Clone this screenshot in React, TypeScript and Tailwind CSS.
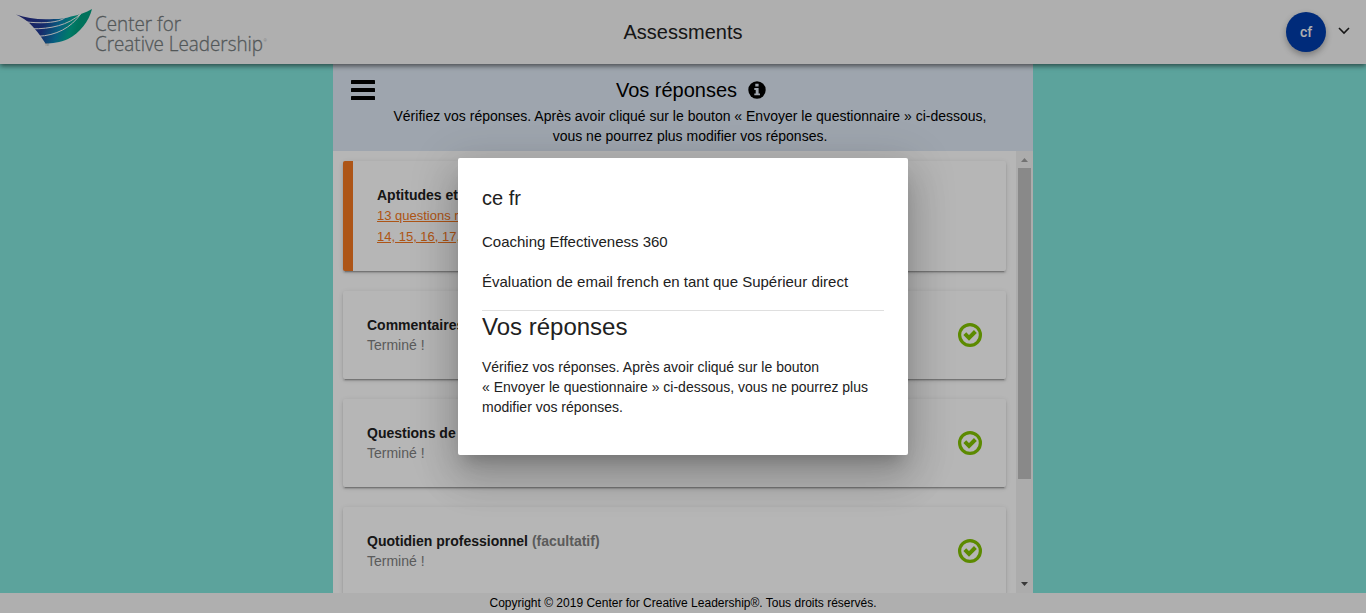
import React from "react";

function Logo() {
  return (
    <svg width="256" height="50" viewBox="12 7 256 50" role="img" aria-label="Center for Creative Leadership">
      <defs>
        <linearGradient id="wing" gradientUnits="userSpaceOnUse" x1="30" y1="10" x2="78" y2="26">
          <stop offset="0" stopColor="#28308a" />
          <stop offset="0.35" stopColor="#203c96" />
          <stop offset="0.65" stopColor="#0a84b4" />
          <stop offset="0.88" stopColor="#00ac93" />
          <stop offset="1" stopColor="#00a080" />
        </linearGradient>
      </defs>
      <path d="M16 14.500C27 18.500 40 20 54 19C60 19 66 18.500 71 16.500C79 15 86 12.500 92 9C89 21 80 33 68 39C60 42.500 52 43.500 45.500 43.500C41 36 34 27 27.500 21.500C24 18.500 20 16.500 16 14.500Z" fill="url(#wing)" />
      <g fill="none" stroke="#f5f5f5" strokeWidth="1">
        <path d="M25 21.800C40 23.500 54 23 62 19.500C63 19 64 18.500 65 17.500" />
        <path d="M32 28.800C50 29 68 25.500 81 13.500" />
        <path d="M38 36.300C56 35.500 71 28 81 13.500" />
      </g>
      <g fill="#737a7c" stroke="#737a7c" strokeWidth="0.300" fontFamily="'Open Sans', 'Noto Sans', sans-serif" fontWeight="300" fontSize="21">
        <text x="95" y="30.800" textLength="86" lengthAdjust="spacingAndGlyphs">Center for</text>
        <text x="95" y="50.500" textLength="168" lengthAdjust="spacingAndGlyphs">Creative Leadership</text>
        <text x="263.500" y="42" fontSize="4" strokeWidth="0">®</text>
        <text x="45" y="46" fontSize="3" strokeWidth="0">TM</text>
      </g>
    </svg>
  );
}

function DoneIcon() {
  return (
    <svg width="24" height="24" viewBox="0 0 24 24" fill="none" stroke="#81c200">
      <circle cx="12" cy="12" r="10.400" strokeWidth="3.200" />
      <path d="M6.800 10.700L11 14.900L17.400 8.500" strokeWidth="4" />
    </svg>
  );
}

function Card({ title, optional }: { title: string; optional?: string }) {
  return (
    <section className="flex h-[88px] shrink-0 items-center justify-between rounded-xs bg-white px-6 shadow-[0_3px_1px_-2px_rgba(0,0,0,.2),0_2px_2px_0_rgba(0,0,0,.14),0_1px_5px_0_rgba(0,0,0,.12)]">
      <div className="text-sm leading-5">
        <h2 className="font-bold text-[#212121]">
          {title} {optional && <span className="text-[#808080]">{optional}</span>}
        </h2>
        <p className="text-[#808080]">Terminé !</p>
      </div>
      <DoneIcon />
    </section>
  );
}

export default function App() {
  return (
    <div className="relative flex h-[613px] flex-col overflow-hidden bg-[#81e5db] font-['Liberation_Sans',Arial,sans-serif] text-black">
      <header className="relative z-10 grid h-16 shrink-0 grid-cols-[1fr_auto_1fr] items-center bg-[#f5f5f5] px-4 shadow-[0_2px_5px_rgba(0,0,0,.55)]">
        <div className="-ml-1"><Logo /></div>
        <h1 className="text-xl text-[#212121]">Assessments</h1>
        <div className="flex items-center justify-end gap-3">
          <span className="flex size-10 items-center justify-center rounded-full bg-[#003dac] font-['Roboto',sans-serif] text-sm font-medium text-[#f5f5f5] shadow-[0_3px_6px_rgba(0,0,0,.3)]">cf</span>
          <svg className="mb-0.5" width="12" height="8" viewBox="0 0 12 8" fill="none" stroke="#212121" strokeWidth="1.600"><path d="M1 1L6 6L11 1" /></svg>
        </div>
      </header>

      <main className="mx-auto flex min-h-0 w-[700px] flex-1 flex-col bg-white">
        <div className="flex h-[87px] shrink-0 items-start bg-[#dee8f4]">
          <button className="flex w-[60px] justify-center pt-4" aria-label="Menu">
            <svg width="24" height="20" viewBox="0 0 24 20">
              <rect width="24" height="4" rx=".6" />
              <rect y="8" width="24" height="4" rx=".6" />
              <rect y="16" width="24" height="4" rx=".6" />
            </svg>
          </button>
          <div className="w-[596px] text-center">
            <h2 className="flex h-10 items-center justify-center gap-[11px] pt-3 text-xl">
              Vos réponses
              <svg width="18" height="18" viewBox="0 0 18 18"><circle cx="9" cy="9" r="8.700" /><path d="M7.300 2.700h3.300v2.700H7.300zM6.300 7h4.300v5.400h1.400v1.900H6.300v-1.900h1.400V8.900H6.300z" fill="#dee8f4" /></svg>
            </h2>
            <p className="-mr-0.5 -ml-1 pt-0.5 text-sm leading-5">Vérifiez vos réponses. Après avoir cliqué sur le bouton «&nbsp;Envoyer le questionnaire&nbsp;» ci-dessous, vous ne pourrez plus modifier vos réponses.</p>
          </div>
        </div>
        <div className="flex min-h-0 flex-1">
          <div className="flex min-w-0 flex-1 flex-col gap-5 overflow-hidden p-2.5">
            <section className="h-[110px] shrink-0 rounded-xs border-l-10 border-[#f37721] bg-white px-6 pt-6 shadow-[0_3px_1px_-2px_rgba(0,0,0,.2),0_2px_2px_0_rgba(0,0,0,.14),0_1px_5px_0_rgba(0,0,0,.12)]">
              <h2 className="text-sm leading-5 font-bold text-[#212121]">Aptitudes et</h2>
              <p className="text-[13px] leading-[21px] text-[#f37721] underline">13 questions r<br />14, 15, 16, 17,</p>
            </section>
            <Card title="Commentaires" />
            <Card title="Questions de" />
            <Card title="Quotidien professionnel" optional="(facultatif)" />
          </div>
          <div className="flex w-[17px] flex-col items-center justify-between bg-[#f1f1f1]">
            <svg width="17" height="17" viewBox="0 0 17 17"><path d="M5 11h7L8.500 7z" fill="#a0a0a0" /></svg>
            <div className="mb-auto h-[311px] w-[13px] bg-[#c1c1c1]" />
            <svg width="17" height="17" viewBox="0 0 17 17"><path d="M5 6h7L8.500 10z" fill="#505050" /></svg>
          </div>
        </div>
      </main>

      <footer className="h-5 shrink-0 bg-[#f5f5f5] text-center text-xs leading-5">Copyright © 2019 Center for Creative Leadership®. Tous droits réservés.</footer>

      <div className="absolute inset-0 z-20 flex items-center justify-center bg-black/[28.8%]">
        <div role="dialog" className="h-[297px] w-[450px] rounded-xs bg-white p-6 text-[#212121] shadow-[0_11px_15px_-7px_rgba(0,0,0,.2),0_24px_38px_3px_rgba(0,0,0,.14),0_9px_46px_8px_rgba(0,0,0,.12)]">
          <h2 className="text-xl leading-8">ce fr</h2>
          <p className="mt-4 text-[15px] leading-6">Coaching Effectiveness 360</p>
          <p className="mt-4 text-[15px] leading-6">Évaluation de email french en tant que Supérieur direct</p>
          <hr className="mt-4 border-[#dfdfdf]" />
          <h3 className="text-2xl leading-8">Vos réponses</h3>
          <p className="mt-3.5 text-sm leading-5">Vérifiez vos réponses. Après avoir cliqué sur le bouton «&nbsp;Envoyer le questionnaire&nbsp;» ci-dessous, vous ne pourrez plus modifier vos réponses.</p>
        </div>
      </div>
    </div>
  );
}
